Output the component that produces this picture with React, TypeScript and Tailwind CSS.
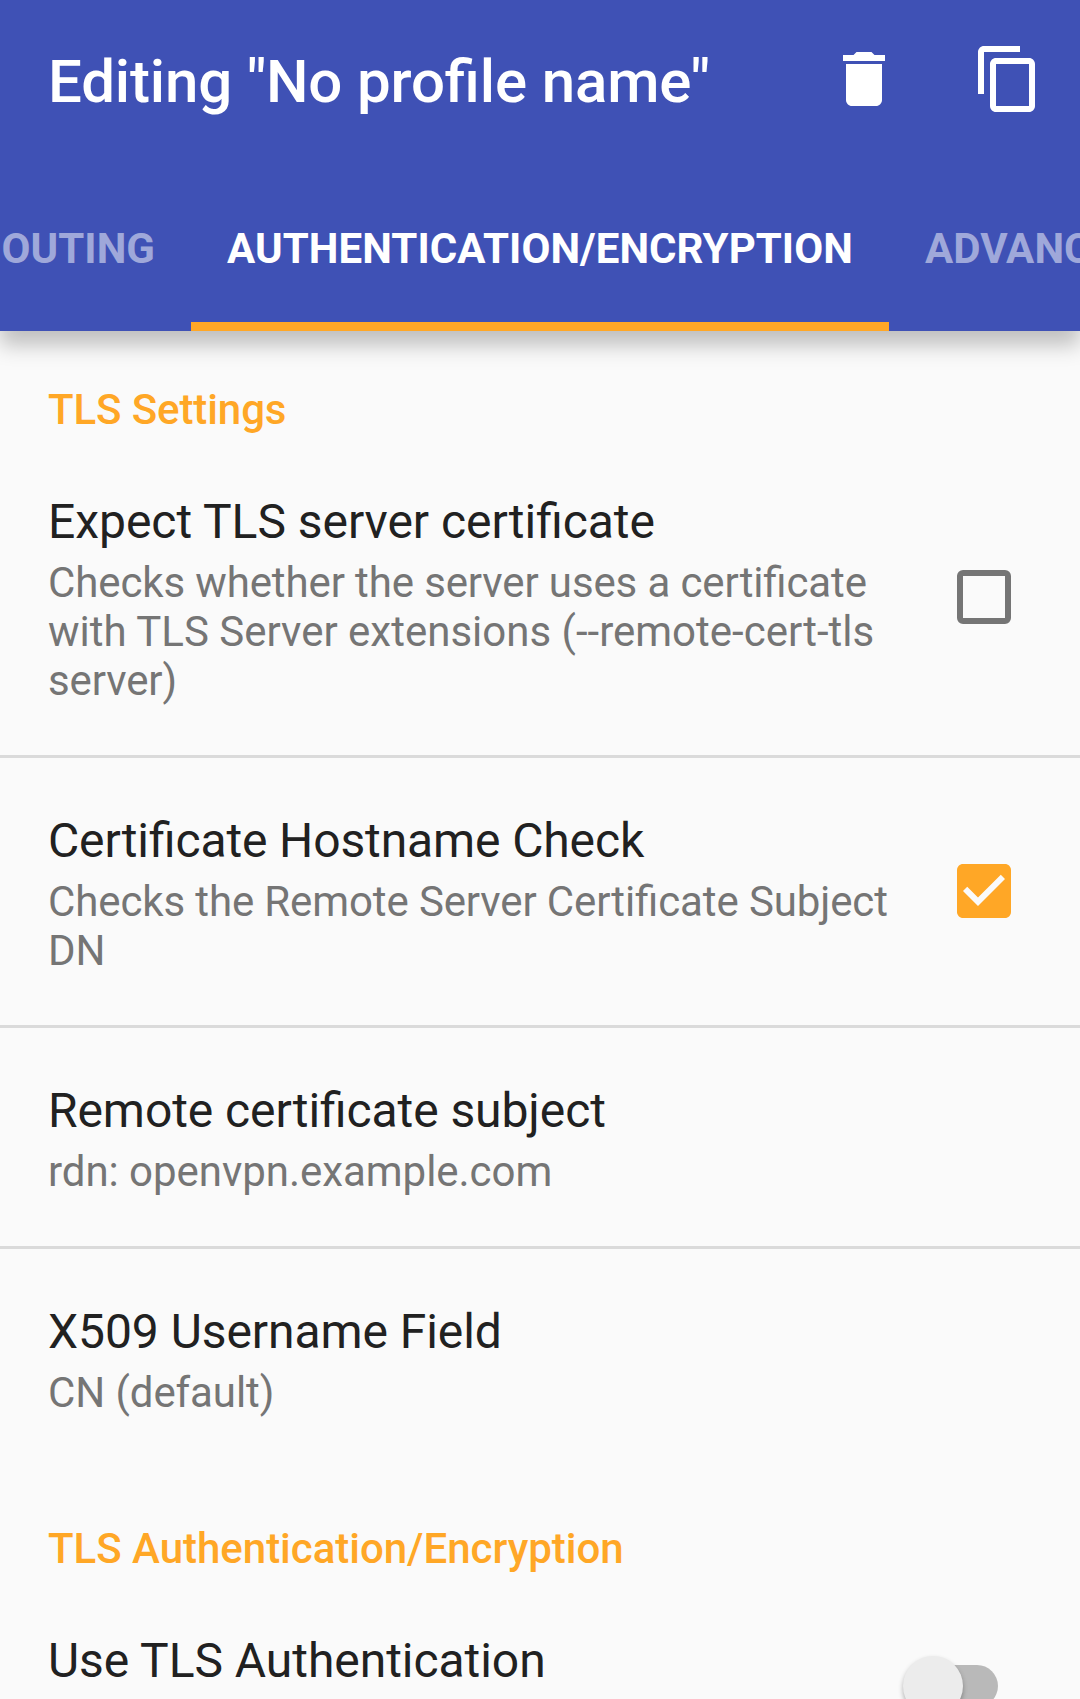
import React from "react";

type Line = { text: string; tracking?: string };

function Row({ title, tracking = "", lines = [], height, children }: { title: string; tracking?: string; lines?: Line[]; height: string; children?: React.ReactNode }) {
  return (
    <section className={`flex shrink-0 items-center justify-between pl-12 ${height}`}>
      <div className="self-start whitespace-nowrap pt-[55px]">
        <h3 className={`text-[48px] leading-[56px] text-[#212121] ${tracking}`}>{title}</h3>
        <div className="mt-[8px] text-[42px] leading-[49px] text-[#757575]">
          {lines.map((l) => (
            <p key={l.text} className={l.tracking}>{l.text}</p>
          ))}
        </div>
      </div>
      {children}
    </section>
  );
}

function Divider() {
  return <div className="h-[3px] shrink-0 bg-[#dadada]" />;
}

export default function App() {
  return (
    <div className="flex h-[1699px] w-[1080px] flex-col overflow-hidden bg-[#fafafa] font-['Roboto',sans-serif] [font-feature-settings:'liga'_1]">
      <header className="relative z-10 flex h-[331px] shrink-0 flex-col bg-[#3f51b5] text-white shadow-[0_14px_20px_rgba(0,0,0,0.24)]">
        <div className="flex h-[165px] items-start pl-12">
          <h1 className="mt-[47px] grow whitespace-nowrap text-[60px] font-medium leading-[70px] tracking-[-0.14px]">Editing "No profile name"</h1>
          <svg className="mr-[72px] mt-[43px] h-[72px] w-[72px]" viewBox="0 0 24 24" fill="currentColor">
            <path d="M6 19c0 1.100.9 2 2 2h8c1.100 0 2-.9 2-2V7H6v12zM19 4h-3.500l-1-1h-5l-1 1H5v2h14V4z" />
          </svg>
          <svg className="mr-[36px] mt-[43px] h-[72px] w-[72px]" viewBox="0 0 24 24" fill="currentColor">
            <path d="M16 1H4c-1.100 0-2 .9-2 2v14h2V3h12V1zm3 4H8c-1.100 0-2 .9-2 2v14c0 1.100.9 2 2 2h11c1.100 0 2-.9 2-2V7c0-1.100-.9-2-2-2zm0 16H8V7h11v14z" />
          </svg>
        </div>
        <nav className="flex h-[166px] overflow-hidden text-[42px] font-bold leading-[168px] tracking-[0.05px]">
          <div className="flex w-[191px] shrink-0 justify-end overflow-hidden pr-[36px] text-[#9fa8da]">OUTING</div>
          <div className="w-[698px] shrink-0 border-b-[9px] border-[#ffa726] text-center">AUTHENTICATION/ENCRYPTION</div>
          <div className="w-[191px] overflow-hidden pl-[36px] text-[#9fa8da]">ADVANCED</div>
        </nav>
      </header>
      <h2 className="h-[108px] shrink-0 pl-12 pt-[54px] text-[42px] font-medium leading-[49px] tracking-[-0.1px] text-[#ffa726]">TLS Settings</h2>
      <Row
        title="Expect TLS server certificate"
        tracking="tracking-[-0.04px]"
        lines={[
          { text: "Checks whether the server uses a certificate", tracking: "tracking-[-0.12px]" },
          { text: "with TLS Server extensions (--remote-cert-tls" },
          { text: "server)", tracking: "tracking-[-0.12px]" },
        ]}
        height="h-[316px]"
      >
        <div className="mr-[69px] size-[54px] rounded-[6px] border-[6px] border-[#757575]" />
      </Row>
      <Divider />
      <Row
        title="Certificate Hostname Check"
        tracking="tracking-[-0.12px]"
        lines={[{ text: "Checks the Remote Server Certificate Subject", tracking: "tracking-[-0.12px]" }, { text: "DN" }]}
        height="h-[267px]"
      >
        <svg className="mb-px mr-[69px] size-[54px]" viewBox="3 3 18 18">
          <path fill="#ffa726" d="M19 3H5c-1.110 0-2 .9-2 2v14c0 1.100.89 2 2 2h14c1.110 0 2-.9 2-2V5c0-1.100-.89-2-2-2z" />
          <path fill="#fafafa" d="M10 17l-5-5 1.410-1.410L10 14.170l7.590-7.590L19 8l-9 9z" />
        </svg>
      </Row>
      <Divider />
      <Row
        title="Remote certificate subject"
        tracking="tracking-[-0.08px]"
        lines={[{ text: "rdn: openvpn.example.com", tracking: "tracking-[-0.04px]" }]}
        height="h-[218px]"
      />
      <Divider />
      <Row
        title="X509 Username Field"
        tracking="tracking-[-0.06px]"
        lines={[{ text: "CN (default)", tracking: "tracking-[-0.08px]" }]}
        height="h-[218px]"
      />
      <h2 className="h-[111px] shrink-0 pl-12 pt-[57px] text-[42px] font-medium leading-[49px] tracking-[-0.02px] text-[#ffa726]">TLS Authentication/Encryption</h2>
      <Row title="Use TLS Authentication" tracking="tracking-[-0.05px]" height="h-[216px]">
        <div className="mr-[82px] flex h-[42px] w-[81px] items-center rounded-full bg-[#b9b9b9]">
          <div className="-ml-[14px] size-[60px] shrink-0 rounded-full bg-[#ececec] shadow-[0_3px_5px_rgba(0,0,0,0.3)]" />
        </div>
      </Row>
    </div>
  );
}
